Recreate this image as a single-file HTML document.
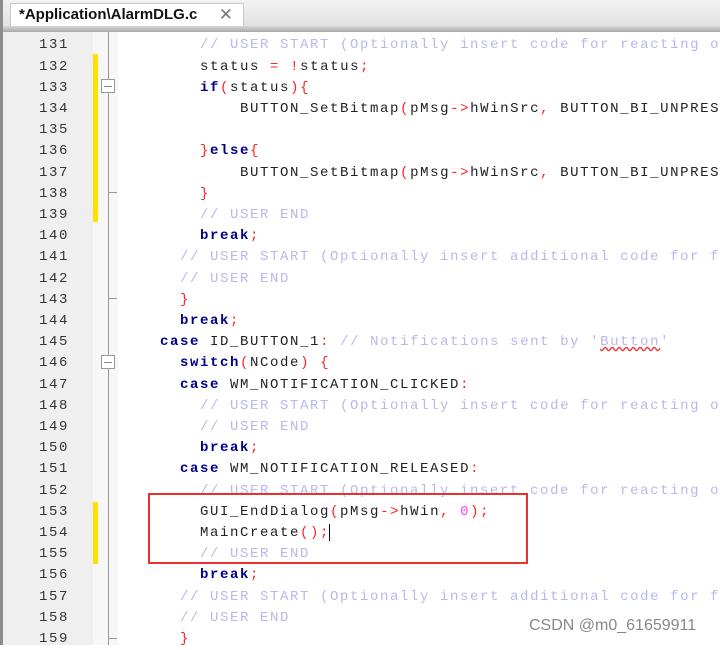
<!DOCTYPE html>
<html><head><meta charset="utf-8"><style>
body{margin:0;width:720px;height:645px;overflow:hidden;background:#fff;position:relative;font-family:"Liberation Mono",monospace}
.tabbar{position:absolute;left:0;top:0;width:720px;height:26px;background:linear-gradient(#f2f2f2,#e2e2e2)}
.tab{position:absolute;left:10px;top:3px;width:234px;height:24px;background:#fff;border:1px solid #c8c8c8;border-bottom:none;box-sizing:border-box;font:bold 15px "Liberation Sans",sans-serif;color:#111;padding:2px 0 0 8px}
.tab .x{position:absolute;right:10px;top:1px;font-weight:normal;color:#777;font-size:17px}
.sep{position:absolute;left:0;top:26px;width:720px;height:6px;background:linear-gradient(#d8d8d8,#a8a8a8)}
.lb{position:absolute;left:0;top:0;width:3px;height:645px;background:#8c8c8c}
.nums{position:absolute;left:3px;top:32px;width:90px;height:613px;background:#efefef}
.fold{position:absolute;left:93px;top:32px;width:25px;height:613px;background:#f7f7f7}
.yel{position:absolute;left:93px;width:5px;background:#ffe000}
.vl{position:absolute;left:108px;top:32px;width:1px;height:613px;background:#999}
.tick{position:absolute;left:108px;width:9px;height:1px;background:#999}
.box{position:absolute;left:101px;width:14px;height:14px;border:1px solid #999;background:#fff;box-sizing:border-box}
.box:after{content:"";position:absolute;left:2px;right:2px;top:6px;height:1px;background:#888}
.ln{position:absolute;left:3px;width:66px;text-align:right;font-size:14px;letter-spacing:1.6px;color:#333;height:21.2px;line-height:21.2px;margin-top:2px}
.cl{position:absolute;left:120px;white-space:pre;font-size:14px;letter-spacing:1.6px;height:21.2px;line-height:21.2px;color:#222;margin-top:2px}
.c{color:#b8b8ec}.k{color:#00008b;font-weight:bold}.o{color:#ff2020}.n{color:#ff40ff}
.w{text-decoration:underline wavy #e33}
.red{position:absolute;left:148px;top:493px;width:380px;height:71px;border:2px solid #e8302f;box-sizing:border-box}
.cur{position:absolute;left:329px;top:524px;width:1px;height:17px;background:#000}
.wm{position:absolute;left:529px;top:617px;font:16px "Liberation Sans",sans-serif;color:#888}
</style></head><body>
<div class="tabbar"></div>
<div class="tab">*Application\AlarmDLG.c<span class="x">✕</span></div>
<div class="sep"></div>
<div class="lb"></div>
<div class="nums"></div>
<div class="fold"></div>
<div class="yel" style="top:54px;height:168px"></div>
<div class="yel" style="top:502px;height:62px"></div>
<div class="vl"></div>
<div class="tick" style="top:192px"></div>
<div class="tick" style="top:298px"></div>
<div class="tick" style="top:638px"></div>
<div class="box" style="top:79px"></div>
<div class="box" style="top:355px"></div>
<div class="ln" style="top:33.4px">131</div><div class="cl" style="top:33.4px">        <span class="c">// USER START (Optionally insert code for reacting on</span></div>
<div class="ln" style="top:54.6px">132</div><div class="cl" style="top:54.6px">        status <span class="o">=</span> <span class="o">!</span>status<span class="o">;</span></div>
<div class="ln" style="top:75.8px">133</div><div class="cl" style="top:75.8px">        <span class="k">if</span><span class="o">(</span>status<span class="o">){</span></div>
<div class="ln" style="top:97px">134</div><div class="cl" style="top:97px">            BUTTON_SetBitmap<span class="o">(</span>pMsg<span class="o">-&gt;</span>hWinSrc<span class="o">,</span> BUTTON_BI_UNPRESSED</div>
<div class="ln" style="top:118.2px">135</div>
<div class="ln" style="top:139.4px">136</div><div class="cl" style="top:139.4px">        <span class="o">}</span><span class="k">else</span><span class="o">{</span></div>
<div class="ln" style="top:160.6px">137</div><div class="cl" style="top:160.6px">            BUTTON_SetBitmap<span class="o">(</span>pMsg<span class="o">-&gt;</span>hWinSrc<span class="o">,</span> BUTTON_BI_UNPRESSED</div>
<div class="ln" style="top:181.8px">138</div><div class="cl" style="top:181.8px">        <span class="o">}</span></div>
<div class="ln" style="top:203px">139</div><div class="cl" style="top:203px">        <span class="c">// USER END</span></div>
<div class="ln" style="top:224.2px">140</div><div class="cl" style="top:224.2px">        <span class="k">break</span><span class="o">;</span></div>
<div class="ln" style="top:245.4px">141</div><div class="cl" style="top:245.4px">      <span class="c">// USER START (Optionally insert additional code for fu</span></div>
<div class="ln" style="top:266.6px">142</div><div class="cl" style="top:266.6px">      <span class="c">// USER END</span></div>
<div class="ln" style="top:287.8px">143</div><div class="cl" style="top:287.8px">      <span class="o">}</span></div>
<div class="ln" style="top:309px">144</div><div class="cl" style="top:309px">      <span class="k">break</span><span class="o">;</span></div>
<div class="ln" style="top:330.2px">145</div><div class="cl" style="top:330.2px">    <span class="k">case</span> ID_BUTTON_1<span class="o">:</span> <span class="c">// Notifications sent by '<span class="w">Button</span>'</span></div>
<div class="ln" style="top:351.4px">146</div><div class="cl" style="top:351.4px">      <span class="k">switch</span><span class="o">(</span>NCode<span class="o">)</span> <span class="o">{</span></div>
<div class="ln" style="top:372.6px">147</div><div class="cl" style="top:372.6px">      <span class="k">case</span> WM_NOTIFICATION_CLICKED<span class="o">:</span></div>
<div class="ln" style="top:393.8px">148</div><div class="cl" style="top:393.8px">        <span class="c">// USER START (Optionally insert code for reacting on</span></div>
<div class="ln" style="top:415px">149</div><div class="cl" style="top:415px">        <span class="c">// USER END</span></div>
<div class="ln" style="top:436.2px">150</div><div class="cl" style="top:436.2px">        <span class="k">break</span><span class="o">;</span></div>
<div class="ln" style="top:457.4px">151</div><div class="cl" style="top:457.4px">      <span class="k">case</span> WM_NOTIFICATION_RELEASED<span class="o">:</span></div>
<div class="ln" style="top:478.6px">152</div><div class="cl" style="top:478.6px">        <span class="c">// USER START (Optionally insert code for reacting on</span></div>
<div class="ln" style="top:499.8px">153</div><div class="cl" style="top:499.8px">        GUI_EndDialog<span class="o">(</span>pMsg<span class="o">-&gt;</span>hWin<span class="o">,</span> <span class="n">0</span><span class="o">);</span></div>
<div class="ln" style="top:521px">154</div><div class="cl" style="top:521px">        MainCreate<span class="o">();</span></div>
<div class="ln" style="top:542.2px">155</div><div class="cl" style="top:542.2px">        <span class="c">// USER END</span></div>
<div class="ln" style="top:563.4px">156</div><div class="cl" style="top:563.4px">        <span class="k">break</span><span class="o">;</span></div>
<div class="ln" style="top:584.6px">157</div><div class="cl" style="top:584.6px">      <span class="c">// USER START (Optionally insert additional code for fu</span></div>
<div class="ln" style="top:605.8px">158</div><div class="cl" style="top:605.8px">      <span class="c">// USER END</span></div>
<div class="ln" style="top:627px">159</div><div class="cl" style="top:627px">      <span class="o">}</span></div>
<div class="red"></div>
<div class="cur"></div>
<div class="wm">CSDN @m0_61659911</div>
</body></html>
